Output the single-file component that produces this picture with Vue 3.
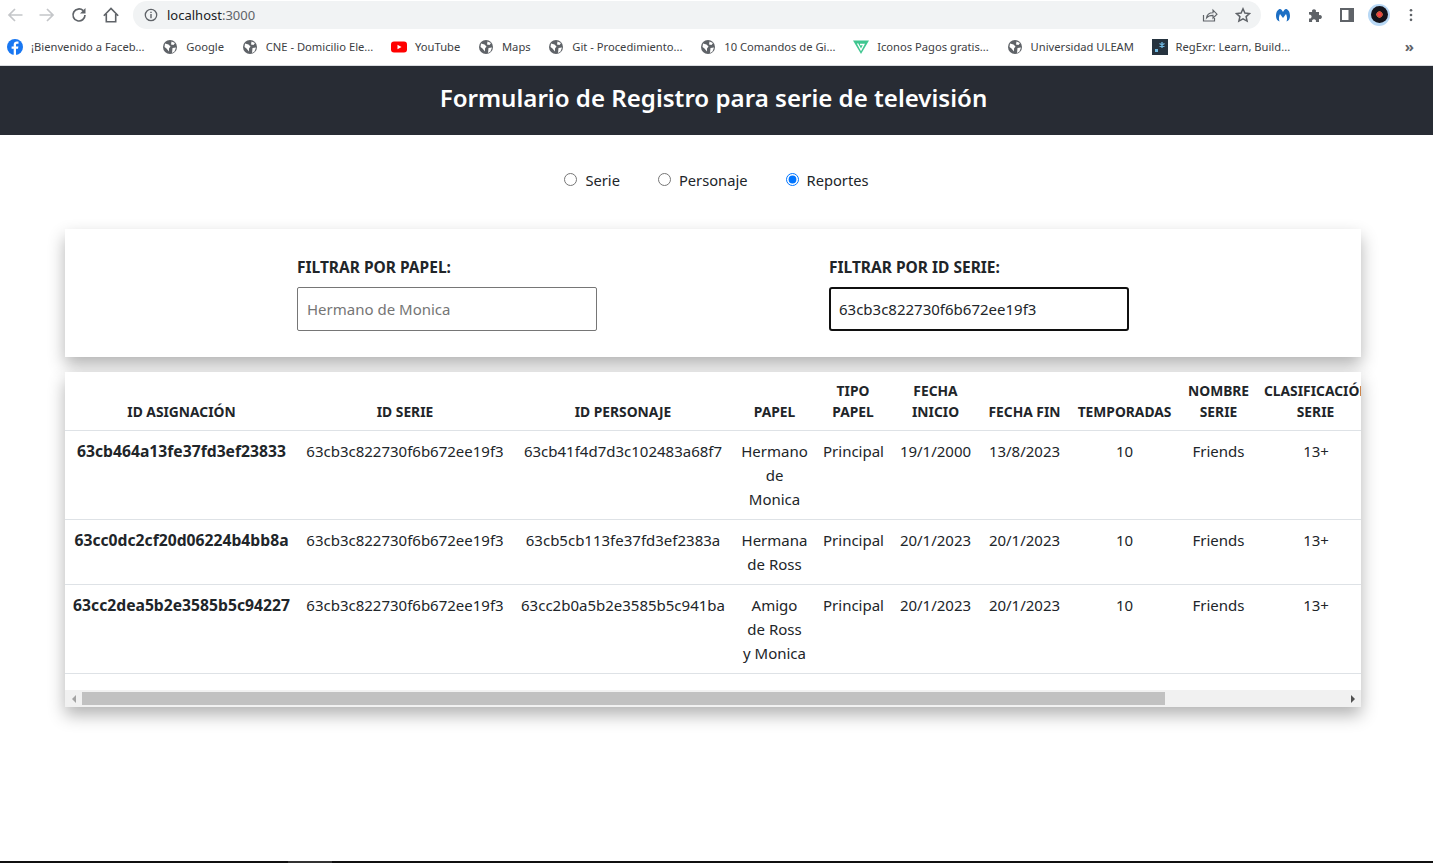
<template>
  <div class="page">
    <div class="chrome">
      <div class="toolbar">
        <svg class="nav" viewBox="0 0 16 16"><path d="M15.500 8H2M8 2L2 8l6 6" fill="none" stroke="#c4c6c9" stroke-width="1.700"/></svg>
        <svg class="nav" viewBox="0 0 16 16"><path d="M.5 8H14M8 2l6 6-6 6" fill="none" stroke="#c4c6c9" stroke-width="1.700"/></svg>
        <svg class="nav" viewBox="0 0 16 16"><path d="M14 8a6 6 0 1 1-1.800-4.300" fill="none" stroke="#5f6368" stroke-width="1.700"/><path d="M14.500 1v5.500H9z" fill="#5f6368"/></svg>
        <svg class="nav" viewBox="0 0 16 16"><path d="M.8 8.800L8 1.500l7.200 7.300M3.300 7v7.800h9.400V7" fill="none" stroke="#5f6368" stroke-width="1.600"/></svg>
        <div class="omnibox">
          <svg class="info" viewBox="0 0 14 14"><circle cx="7" cy="7" r="5.700" fill="none" stroke="#5f6368" stroke-width="1.300"/><path d="M7 6v4.200M7 3.800v1.300" stroke="#5f6368" stroke-width="1.400"/></svg>
          <span class="url">localhost<span class="port">:3000</span></span>
          <span class="spacer"></span>
          <svg class="omni-icon" viewBox="0 0 16 16"><path d="M1.500 8v6h11v-3" fill="none" stroke="#5f6368" stroke-width="1.200"/><path d="M4.500 11c.4-3.500 3-5.200 6.500-5.200V3l4 4.200-4 4V8.400c-3 0-5 .7-6.500 2.600z" fill="none" stroke="#5f6368" stroke-width="1.100"/></svg>
          <svg class="omni-icon star" viewBox="0 0 16 16"><path d="M8 1.800l1.900 4.200 4.600.5-3.400 3.100 1 4.500L8 11.800l-4.100 2.300 1-4.500L1.500 6.500l4.600-.5z" fill="none" stroke="#5f6368" stroke-width="1.500"/></svg>
        </div>
        <svg class="ext mb" viewBox="0 0 16 16"><path d="M1 9C1 4 3.500 2 5 2c1.300 0 2.300 1.500 3 3 .7-1.500 1.700-3 3-3 1.500 0 4 2 4 7 0 3-1.500 5-3.500 5.500C12.500 12 12 9 11 7L8 11 5 7c-1 2-1.500 5-.5 7.500C2.500 14 1 12 1 9z" fill="#1d6fc4"/></svg>
        <svg class="ext puzzle" viewBox="0 0 16 16"><path d="M2 5h3.200a2 2 0 1 1 3.600 0H12v3.200a2 2 0 1 1 0 3.600V15H8.800a2 2 0 1 0-3.600 0H2v-3.500a2 2 0 1 0 0-3.800z" fill="#5f6368"/></svg>
        <svg class="ext side" viewBox="0 0 14 14"><path d="M0 0h14v14H0z" fill="#5f6368"/><path d="M2 2h6.500v10H2z" fill="#fff"/></svg>
        <div class="avatar"><span class="disc"></span></div>
        <svg class="ext dots" viewBox="0 0 4 16"><circle cx="2" cy="2.500" r="1.500" fill="#5f6368"/><circle cx="2" cy="8" r="1.500" fill="#5f6368"/><circle cx="2" cy="13.500" r="1.500" fill="#5f6368"/></svg>
      </div>
      <div class="bookmarks">
        <a v-for="b in bookmarks" :key="b.label" class="bookmark">
          <svg v-if="b.icon === 'fb'" class="fav" viewBox="0 0 16 16"><circle cx="8" cy="8" r="8" fill="#1877f2"/><path d="M9 16V9.800h2l.4-2.400H9V6c0-.8.300-1.300 1.400-1.300h1.100V2.600C11 2.500 10.400 2.400 9.800 2.400 8 2.400 6.700 3.500 6.700 5.600v1.800H4.600v2.400h2.100V16z" fill="#fff"/></svg>
          <svg v-else-if="b.icon === 'yt'" class="fav" viewBox="0 0 16 16"><rect y="2.500" width="16" height="11" rx="3" fill="#f00"/><path d="M6.500 5.700v4.600L10.500 8z" fill="#fff"/></svg>
          <svg v-else-if="b.icon === 'vue'" class="fav" viewBox="0 0 16 16"><path d="M0 1.500h16L8 15z" fill="#3fc690"/><path d="M4.500 4.500L8 10.800l2.900-5.300H7" fill="none" stroke="#fff" stroke-width="1.300"/></svg>
          <svg v-else-if="b.icon === 'regex'" class="fav" viewBox="0 0 16 16"><rect width="16" height="16" fill="#26333f"/><rect x="3" y="10" width="3" height="3" fill="#70b8e0"/><path d="M10 3v6M7.500 4.500l5 3M12.500 4.500l-5 3" stroke="#70b8e0" stroke-width="1.300"/></svg>
          <svg v-else class="fav" viewBox="0 0 16 16"><circle cx="8" cy="8" r="7" fill="#5f6368"/><path d="M3 4.500l3.500 1 2 2-1.500 2v3L4.500 9.500 2.500 8zM9.500 2.500l3.500 1.500-1.500 2-2.500-.5zM10.500 9l3.500-.5-1.500 4-2.500 1.500z" fill="#fff"/></svg>
          <span>{{ b.label }}</span>
        </a>
        <span class="spacer"></span>
        <span class="more">»</span>
      </div>
    </div>

    <header class="app-header">
      <h1>Formulario de Registro para serie de televisión</h1>
    </header>

    <div class="radios">
      <label v-for="o in options" :key="o" class="radio">
        <input v-model="section" type="radio" name="section" :value="o" />
        <span>{{ o }}</span>
      </label>
    </div>

    <div class="content">
      <section class="card filters">
        <div class="filter">
          <label>FILTRAR POR PAPEL:</label>
          <input v-model="papel" type="text" placeholder="Hermano de Monica" />
        </div>
        <div class="filter">
          <label>FILTRAR POR ID SERIE:</label>
          <input v-model="serie" class="focused" type="text" />
        </div>
      </section>

      <section class="card table-card">
        <div class="table-clip">
          <table>
            <thead>
              <tr>
                <th v-for="h in headers" :key="h">{{ h }}</th>
              </tr>
            </thead>
            <tbody>
              <tr v-for="r in rows" :key="r.id">
                <td class="strong">{{ r.id }}</td>
                <td>63cb3c822730f6b672ee19f3</td>
                <td>{{ r.personaje }}</td>
                <td class="papel">{{ r.papel }}</td>
                <td>Principal</td>
                <td>{{ r.inicio }}</td>
                <td>{{ r.fin }}</td>
                <td>10</td>
                <td>Friends</td>
                <td>13+</td>
              </tr>
            </tbody>
          </table>
        </div>
        <div class="scrollbar">
          <span class="arrow-box"><span class="arrow left"></span></span>
          <div class="track"><div class="thumb"></div></div>
          <span class="arrow-box"><span class="arrow right"></span></span>
        </div>
      </section>
    </div>
    <div class="taskbar"><span class="task"></span></div>
  </div>
</template>

<script setup>
import { ref } from 'vue'

const section = ref('Reportes')
const papel = ref('')
const serie = ref('63cb3c822730f6b672ee19f3')

const options = ['Serie', 'Personaje', 'Reportes']

const bookmarks = [
  { label: '¡Bienvenido a Faceb...', icon: 'fb' },
  { label: 'Google', icon: 'globe' },
  { label: 'CNE - Domicilio Ele...', icon: 'globe' },
  { label: 'YouTube', icon: 'yt' },
  { label: 'Maps', icon: 'globe' },
  { label: 'Git - Procedimiento...', icon: 'globe' },
  { label: '10 Comandos de Gi...', icon: 'globe' },
  { label: 'Iconos Pagos gratis...', icon: 'vue' },
  { label: 'Universidad ULEAM', icon: 'globe' },
  { label: 'RegExr: Learn, Build...', icon: 'regex' }
]

const headers = [
  'ID ASIGNACIÓN', 'ID SERIE', 'ID PERSONAJE', 'PAPEL', 'TIPO PAPEL',
  'FECHA INICIO', 'FECHA FIN', 'TEMPORADAS', 'NOMBRE SERIE', 'CLASIFICACIÓN SERIE'
]

const rows = [
  { id: '63cb464a13fe37fd3ef23833', personaje: '63cb41f4d7d3c102483a68f7', papel: 'Hermano de Monica', inicio: '19/1/2000', fin: '13/8/2023' },
  { id: '63cc0dc2cf20d06224b4bb8a', personaje: '63cb5cb113fe37fd3ef2383a', papel: 'Hermana de Ross', inicio: '20/1/2023', fin: '20/1/2023' },
  { id: '63cc2dea5b2e3585b5c94227', personaje: '63cc2b0a5b2e3585b5c941ba', papel: 'Amigo de\u00a0Ross y\u00a0Monica', inicio: '20/1/2023', fin: '20/1/2023' }
]
</script>

<style>
html, body {
  margin: 0;
  background: #fff;
  overflow: hidden;
}
</style>

<style scoped>
.page {
  height: 863px;
  display: flex;
  flex-direction: column;
  font-family: "Noto Sans", "Open Sans", sans-serif;
  color: #212529;
  position: relative;
  overflow: hidden;
}
.chrome {
  height: 66px;
  background: #fff;
  box-sizing: border-box;
  border-bottom: 1px solid #dadce0;
  flex: none;
}
.toolbar {
  height: 29px;
  display: flex;
  align-items: center;
  padding: 0 20px 0 7px;
  box-sizing: border-box;
}
.nav {
  width: 16px;
  height: 16px;
  margin-right: 16px;
  flex: none;
}
.omnibox {
  height: 28px;
  margin: 1px 14px 0 -2px;
  flex: 1;
  border-radius: 14px;
  background: #f1f3f4;
  display: flex;
  align-items: center;
  padding: 0 10px 0 11px;
}
.info { width: 14px; height: 14px; margin-right: 9px; }
.url { font-size: 13px; color: #202124; margin-top: -1px; }
.port { color: #5f6368; }
.spacer { flex: 1; }
.omni-icon { width: 16px; height: 16px; margin-left: 17px; }
.ext { flex: none; }
.mb { width: 16px; height: 16px; margin-right: 16px; }
.puzzle { width: 16px; height: 16px; margin-right: 17px; }
.side { width: 14px; height: 14px; margin-right: 14px; }
.avatar {
  width: 22px;
  height: 22px;
  border-radius: 50%;
  background: #b8d8f5;
  display: flex;
  align-items: center;
  justify-content: center;
  margin-right: 19px;
}
.disc {
  width: 17px;
  height: 17px;
  border-radius: 50%;
  background: radial-gradient(circle, #ff3b4a 0 1.500px, #c9553a 1.500px 3px, #14141c 3.500px);
}
.dots { width: 4px; height: 14px; }
.bookmarks {
  height: 36px;
  display: flex;
  align-items: center;
  padding: 0 19px 0 7px;
  box-sizing: border-box;
}
.bookmark {
  display: flex;
  align-items: center;
  font-size: 11.200px;
  color: #3c4043;
  margin-right: 17.700px;
  white-space: nowrap;
}
.bookmark span { margin-top: -1px; }
.fav {
  width: 16px;
  height: 16px;
  margin-right: 8px;
  flex: none;
}
.more { font-size: 15px; font-weight: 700; color: #5f6368; margin-top: -2px; }
.app-header {
  height: 69px;
  flex: none;
  background: #282c34;
  display: flex;
  align-items: center;
  justify-content: center;
  padding: 0 6px 6px 0;
  box-sizing: border-box;
}
.app-header h1 {
  margin: 0;
  font-size: 24.100px;
  font-weight: 600;
  color: #fff;
}
.radios {
  display: flex;
  justify-content: center;
  gap: 38px;
  padding-top: 33px;
  height: 61px;
  flex: none;
  font-size: 14.700px;
  line-height: 24px;
  box-sizing: content-box;
}
.radio {
  display: flex;
  align-items: flex-start;
  gap: 8px;
}
.radio input {
  margin: 5px 0 0;
  width: 13px;
  height: 13px;
}
.content {
  margin: 0 72px 0 65px;
  display: flex;
  flex-direction: column;
  gap: 15px;
}
.card {
  background: #fff;
  box-shadow: 0 8px 16px rgba(0, 0, 0, 0.3);
}
.filters {
  height: 128px;
  box-sizing: border-box;
  display: flex;
  justify-content: center;
  gap: 232px;
  padding-top: 26px;
}
.filter { width: 300px; }
.filter label {
  display: block;
  font-size: 15.500px;
  font-weight: 700;
  line-height: 24px;
  margin-bottom: 8px;
}
.filter input {
  display: block;
  box-sizing: border-box;
  width: 300px;
  height: 44px;
  padding: 0 9px;
  font: inherit;
  font-size: 15px;
  color: #212529;
  border: 1px solid #767676;
  outline: none;
  border-radius: 2px;
}
.filter input::placeholder { color: #757575; }
.filter input.focused {
  border: 2px solid #101010;
  border-radius: 3px;
  padding: 0 8px;
}
.table-clip {
  overflow: hidden;
}
table {
  border-collapse: collapse;
  table-layout: fixed;
  width: 1310px;
  font-size: 15px;
  line-height: 24px;
}
th {
  box-sizing: border-box;
  font-size: 13.800px;
  font-weight: 700;
  line-height: 21px;
  padding: 8px;
  vertical-align: bottom;
  text-align: center;
  border-bottom: 1px solid #dee2e6;
}
td {
  padding: 8px;
  vertical-align: top;
  text-align: center;
  border-bottom: 1px solid #dee2e6;
  white-space: nowrap;
}
td.papel { white-space: normal; padding-left: 6px; padding-right: 6px; }
td.strong { font-weight: 700; font-size: 15.700px; }
th:nth-child(1) { width: 233px; }
th:nth-child(2) { width: 214px; }
th:nth-child(3) { width: 222px; }
th:nth-child(4) { width: 81px; }
th:nth-child(5) { width: 76px; }
th:nth-child(6) { width: 89px; }
th:nth-child(7) { width: 89px; padding-left: 4px; padding-right: 4px; }
th:nth-child(8) { width: 111px; }
th:nth-child(9) { width: 77px; }
th:nth-child(10) { width: 118px; padding-left: 7px; }
.scrollbar {
  margin-top: 16px;
  height: 17px;
  background: #f1f1f1;
  display: flex;
  align-items: center;
}
.arrow-box {
  width: 17px;
  height: 17px;
  display: flex;
  align-items: center;
  justify-content: center;
  flex: none;
}
.arrow {
  width: 0;
  height: 0;
  border-top: 4px solid transparent;
  border-bottom: 4px solid transparent;
}
.arrow.left { border-right: 4px solid #a3a3a3; }
.arrow.right { border-left: 4px solid #505050; }
.track {
  flex: 1;
  height: 13px;
}
.thumb {
  width: 1083px;
  height: 100%;
  background: #c1c1c1;
}
.taskbar {
  position: absolute;
  left: 0;
  right: 0;
  bottom: 0;
  height: 2px;
  background: #101010;
}
.task {
  position: absolute;
  left: 288px;
  width: 44px;
  height: 2px;
  background: #333;
}
</style>
